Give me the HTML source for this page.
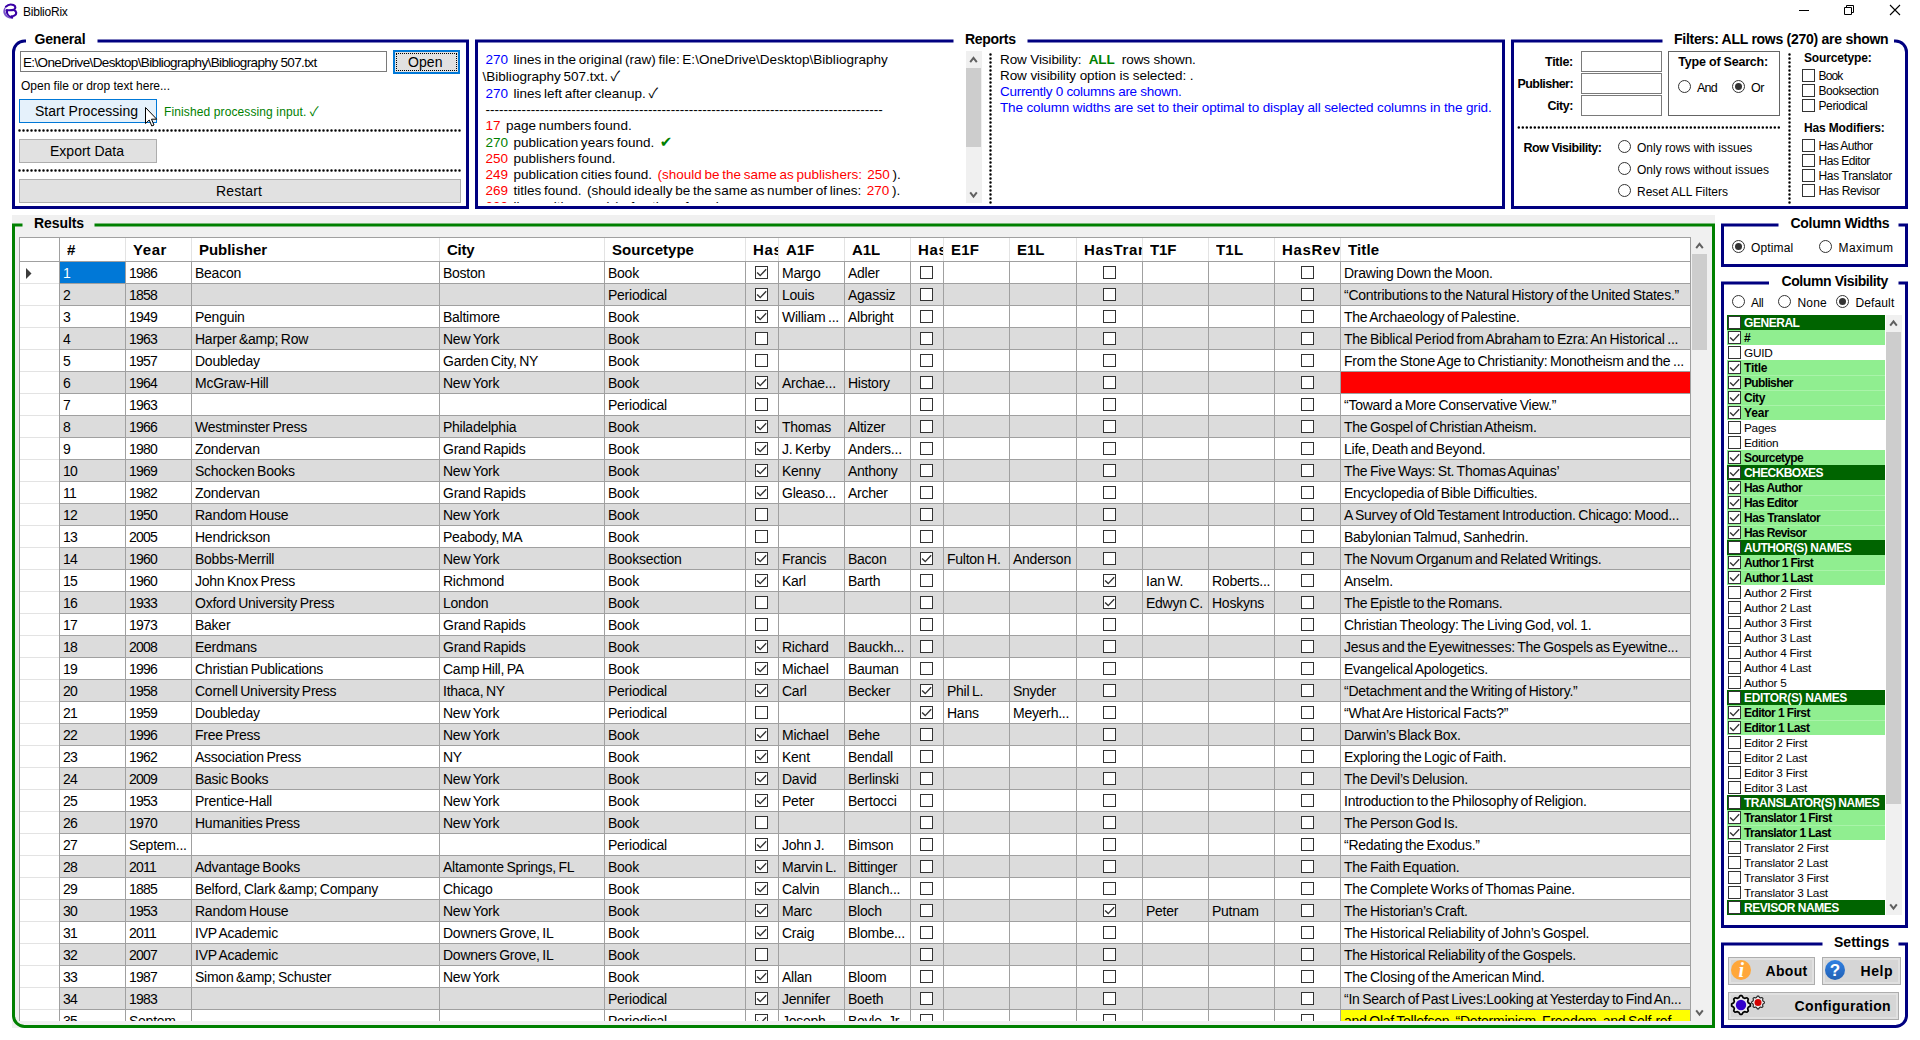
<!DOCTYPE html>
<html lang="en"><head><meta charset="utf-8"><title>BiblioRix</title>
<style>
html,body{margin:0;padding:0;}
body{width:1920px;height:1040px;overflow:hidden;background:#fff;position:relative;font-family:"Liberation Sans",sans-serif;color:#000;}
body div{position:absolute;box-sizing:border-box;}
.t{line-height:20px;white-space:pre;}
svg{position:absolute;left:0;top:0;overflow:visible;}
.btn{background:#e1e1e1;border:1px solid #adadad;}
.tb{background:#fff;border:1px solid #7a7a7a;}
.ck{font-family:"Liberation Sans","Noto Sans CJK SC","DejaVu Sans",sans-serif;font-size:14px;line-height:1;}
.ckb{font-family:"Liberation Sans","DejaVu Sans",sans-serif;font-size:15px;line-height:1;}
.cb{width:13px;height:13px;border:1px solid #333;background:#fff;}
.cb svg{left:-1px;top:-1px;}
.rd{width:13px;height:13px;border:1px solid #333;border-radius:50%;background:#fff;}
.rd.on::after{content:"";position:absolute;left:2px;top:2px;width:7px;height:7px;border-radius:50%;background:#333;}
#grid{left:19px;top:237px;width:1672px;height:784px;overflow:hidden;background:#fff;}
.r{left:0;width:1672px;height:22px;border-bottom:1px solid #a0a0a0;background:#fff;}
.r.a{background:#dcdcdc;}
.r .h{left:1px;top:0;width:39px;height:22px;background:#fff;border-bottom:1px solid #e3e3e3;}
.c{top:0;height:21px;overflow:hidden;}
.c .t{left:3px;top:1px;font-size:14px;letter-spacing:-.25px;word-spacing:-1px;}
.c .t.n{letter-spacing:-.78px;}
.c .cb{top:4px;}
.vl{top:25px;width:1px;height:760px;background:#a0a0a0;}
.hl{top:1px;width:1px;height:23px;background:#e3e3e3;}
.hd{top:1px;height:23px;overflow:hidden;}
.hd .t{left:7px;top:2px;font-size:15px;font-weight:bold;transform:scaleY(.94);transform-origin:0 15px;}
#clist{left:1727px;top:315px;width:158px;height:600px;overflow:hidden;background:#fff;}
.li{left:0;width:158px;height:15px;}
.li.g{background:#90ee90;}
.li.d{background:#006400;color:#fff;}
.li .cb{left:1px;top:1px;}
.li .t{left:17px;top:-2px;font-size:11.8px;letter-spacing:-.25px;}
.li.g+.li.g{box-shadow:inset 0 1px 0 #a9f3a9;}
.li.g .t,.li.d .t{font-weight:bold;font-size:12px;}
</style></head><body>

<div style="left:12px;top:215px;width:1703px;height:813px;background:#f0f0f0;"></div>
<div class="t" style="left:23px;top:2px;font-size:12px;letter-spacing:-0.232px;">BiblioRix</div>
<div class="t" style="left:34.5px;top:29px;font-size:14px;font-weight:bold;letter-spacing:-0.177px;">General</div>
<div class="t" style="left:965px;top:29px;font-size:14px;font-weight:bold;letter-spacing:-0.328px;">Reports</div>
<div class="t" style="left:1674px;top:29px;font-size:14px;font-weight:bold;letter-spacing:-0.269px;">Filters: ALL rows (270) are shown</div>
<div class="t" style="left:34px;top:213px;font-size:14px;font-weight:bold;letter-spacing:-0.082px;">Results</div>
<div class="t" style="left:1790.5px;top:213px;font-size:14px;font-weight:bold;letter-spacing:-0.287px;">Column Widths</div>
<div class="t" style="left:1781.5px;top:271px;font-size:14px;font-weight:bold;letter-spacing:-0.407px;">Column Visibility</div>
<div class="t" style="left:1834px;top:932px;font-size:14px;font-weight:bold;letter-spacing:0.009px;">Settings</div>
<div class="tb" style="left:20px;top:51px;width:367px;height:21px;"></div>
<div class="t" style="left:23px;top:53px;font-size:13.5px;letter-spacing:-0.635px;">E:\OneDrive\Desktop\Bibliography\Bibliography 507.txt</div>
<div style="left:393px;top:50px;width:67px;height:24px;background:#e1e1e1;border:2px solid #0078d7;"><div style="left:1px;top:1px;right:1px;bottom:1px;border:1px dotted #000;"></div></div>
<div class="t" style="left:408px;top:52px;font-size:14px;letter-spacing:0.063px;">Open</div>
<div class="t" style="left:21px;top:76px;font-size:12px;letter-spacing:-0.014px;">Open file or drop text here...</div>
<div style="left:19px;top:99px;width:138px;height:24px;background:#e5f1fb;border:1px solid #0078d7;"></div>
<div class="t" style="left:35px;top:101px;font-size:14px;letter-spacing:0.018px;">Start Processing</div>
<div class="t" style="left:164px;top:102px;font-size:12px;color:#008000;letter-spacing:0.115px;">Finished processing input. <span class="ck" style="font-size:13px">✓</span></div>
<div class="btn" style="left:19px;top:139px;width:138px;height:24px;"></div>
<div class="t" style="left:50px;top:141px;font-size:14px;letter-spacing:0.007px;">Export Data</div>
<div class="btn" style="left:19px;top:179px;width:442px;height:24px;"></div>
<div class="t" style="left:216px;top:181px;font-size:14px;letter-spacing:0.125px;">Restart</div>
<div style="left:478px;top:43px;width:488px;height:160px;overflow:hidden;">
<div class="t" style="left:7.5px;top:7px;font-size:13.5px;word-spacing:-1.1px;letter-spacing:.02px;"><span style="color:#0000ff">270</span>  lines in the original (raw) file: E:\OneDrive\Desktop\Bibliography</div>
<div class="t" style="left:4.5px;top:24px;font-size:13.5px;word-spacing:-1.1px;letter-spacing:.02px;">\Bibliography 507.txt. <span class="ck">✓</span></div>
<div class="t" style="left:7.5px;top:41px;font-size:13.5px;word-spacing:-1.1px;letter-spacing:.02px;"><span style="color:#0000ff">270</span>  lines left after cleanup. <span class="ck">✓</span></div>
<div class="t" style="left:7.5px;top:57px;font-size:13.5px;word-spacing:-1.1px;letter-spacing:.02px;">----------------------------------------------------------------------------------------</div>
<div class="t" style="left:7.5px;top:73px;font-size:13.5px;word-spacing:-1.1px;letter-spacing:.02px;"><span style="color:#ff0000">17</span>  page numbers found.</div>
<div class="t" style="left:7.5px;top:90px;font-size:13.5px;word-spacing:-1.1px;letter-spacing:.02px;"><span style="color:#008000">270</span>  publication years found.  <span style="color:#008000"><span class="ckb">✔</span></span></div>
<div class="t" style="left:7.5px;top:106px;font-size:13.5px;word-spacing:-1.1px;letter-spacing:.02px;"><span style="color:#ff0000">250</span>  publishers found.</div>
<div class="t" style="left:7.5px;top:122px;font-size:13.5px;word-spacing:-1.1px;letter-spacing:.02px;"><span style="color:#ff0000">249</span>  publication cities found.  <span style="color:#ff0000">(should be the same as publishers:  250</span> ).</div>
<div class="t" style="left:7.5px;top:138px;font-size:13.5px;word-spacing:-1.1px;letter-spacing:.02px;"><span style="color:#ff0000">269</span>  titles found.  (should ideally be the same as number of lines:  <span style="color:#ff0000">270</span> ).</div>
<div class="t" style="left:7.5px;top:154px;font-size:13.5px;word-spacing:-1.1px;letter-spacing:.02px;"><span style="color:#ff0000">239</span>  lines with name(s) of authors found.</div>
</div>
<div style="left:966px;top:51px;width:16px;height:152px;background:#f0f0f0;"></div>
<div style="left:966px;top:68px;width:15px;height:79px;background:#cdcdcd;"></div>
<div class="t" style="left:1000px;top:50px;font-size:13.5px;letter-spacing:-0.110px;">Row Visibility:  <b style="color:#008000">ALL</b>  rows shown.</div>
<div class="t" style="left:1000px;top:66px;font-size:13.5px;letter-spacing:-0.088px;">Row visibility option is selected: .</div>
<div class="t" style="left:1000px;top:82px;font-size:13.5px;color:#0000ff;letter-spacing:-0.281px;">Currently 0 columns are shown.</div>
<div class="t" style="left:1000px;top:98px;font-size:13.5px;color:#0000ff;letter-spacing:-0.129px;">The column widths are set to their optimal to display all selected columns in the grid.</div>
<div class="t" style="left:1545px;top:52px;font-size:12.5px;font-weight:bold;letter-spacing:-0.272px;">Title:</div>
<div class="t" style="left:1517.5px;top:74px;font-size:12.5px;font-weight:bold;letter-spacing:-0.562px;">Publisher:</div>
<div class="t" style="left:1547.5px;top:96px;font-size:12.5px;font-weight:bold;letter-spacing:-0.456px;">City:</div>
<div class="tb" style="left:1581px;top:51px;width:81px;height:21px;"></div>
<div class="tb" style="left:1581px;top:73px;width:81px;height:21px;"></div>
<div class="tb" style="left:1581px;top:95px;width:81px;height:21px;"></div>
<div style="left:1668px;top:51px;width:112px;height:65px;border:1px solid #646464;"></div>
<div class="t" style="left:1678.3px;top:52px;font-size:12.5px;font-weight:bold;letter-spacing:-0.210px;">Type of Search:</div>
<div class="rd" style="left:1678px;top:80px;width:13px;height:13px;"></div>
<div class="t" style="left:1697px;top:78px;font-size:12.5px;letter-spacing:-0.747px;">And</div>
<div class="rd on" style="left:1732px;top:80px;width:13px;height:13px;"></div>
<div class="t" style="left:1751px;top:78px;font-size:12.5px;letter-spacing:-0.443px;">Or</div>
<div class="t" style="left:1523.5px;top:138px;font-size:12.5px;font-weight:bold;letter-spacing:-0.480px;">Row Visibility:</div>
<div class="rd" style="left:1618px;top:140px;width:13px;height:13px;"></div>
<div class="t" style="left:1637px;top:138px;font-size:12px;">Only rows with issues</div>
<div class="rd" style="left:1618px;top:162px;width:13px;height:13px;"></div>
<div class="t" style="left:1637px;top:160px;font-size:12px;">Only rows without issues</div>
<div class="rd" style="left:1618px;top:184px;width:13px;height:13px;"></div>
<div class="t" style="left:1637px;top:182px;font-size:12px;">Reset ALL Filters</div>
<div class="t" style="left:1804px;top:48px;font-size:12px;font-weight:bold;letter-spacing:-0.169px;">Sourcetype:</div>
<div class="cb" style="left:1802px;top:69px;"></div>
<div class="t" style="left:1818.5px;top:66px;font-size:12px;letter-spacing:-0.838px;">Book</div>
<div class="cb" style="left:1802px;top:84px;"></div>
<div class="t" style="left:1818.5px;top:81px;font-size:12px;letter-spacing:-0.489px;">Booksection</div>
<div class="cb" style="left:1802px;top:99px;"></div>
<div class="t" style="left:1818.5px;top:96px;font-size:12px;letter-spacing:-0.395px;">Periodical</div>
<div class="t" style="left:1804px;top:118px;font-size:12px;font-weight:bold;letter-spacing:-0.149px;">Has Modifiers:</div>
<div class="cb" style="left:1802px;top:139px;"></div>
<div class="t" style="left:1818.5px;top:136px;font-size:12px;letter-spacing:-0.537px;">Has Author</div>
<div class="cb" style="left:1802px;top:154px;"></div>
<div class="t" style="left:1818.5px;top:151px;font-size:12px;letter-spacing:-0.462px;">Has Editor</div>
<div class="cb" style="left:1802px;top:169px;"></div>
<div class="t" style="left:1818.5px;top:166px;font-size:12px;letter-spacing:-0.338px;">Has Translator</div>
<div class="cb" style="left:1802px;top:184px;"></div>
<div class="t" style="left:1818.5px;top:181px;font-size:12px;letter-spacing:-0.373px;">Has Revisor</div>
<div class="rd on" style="left:1732px;top:240px;width:13px;height:13px;"></div>
<div class="t" style="left:1751px;top:238px;font-size:12px;letter-spacing:0.129px;">Optimal</div>
<div class="rd" style="left:1819px;top:240px;width:13px;height:13px;"></div>
<div class="t" style="left:1838.5px;top:238px;font-size:12px;letter-spacing:0.428px;">Maximum</div>
<div class="rd" style="left:1732px;top:295px;width:13px;height:13px;"></div>
<div class="t" style="left:1751px;top:293px;font-size:12px;letter-spacing:-0.362px;">All</div>
<div class="rd" style="left:1778px;top:295px;width:13px;height:13px;"></div>
<div class="t" style="left:1797.5px;top:293px;font-size:12px;letter-spacing:0.178px;">None</div>
<div class="rd on" style="left:1836px;top:295px;width:13px;height:13px;"></div>
<div class="t" style="left:1855.4px;top:293px;font-size:12px;letter-spacing:0.140px;">Default</div>
<div id="clist">
<div class="li d" style="top:0px;">
<div class="cb" style="left:1px;top:1px;"></div>
<div class="t" style="letter-spacing:-0.453px">GENERAL</div></div>
<div class="li g" style="top:15px;">
<div class="cb" style="left:1px;top:1px;"><svg width="13" height="13" viewBox="0 0 13 13"><path d="M2.1 6.5L5.2 9.6L11.2 3.2" fill="none" stroke="#333" stroke-width="1.35"/></svg></div>
<div class="t">#</div></div>
<div class="li " style="top:30px;">
<div class="cb" style="left:1px;top:1px;"></div>
<div class="t">GUID</div></div>
<div class="li g" style="top:45px;">
<div class="cb" style="left:1px;top:1px;"><svg width="13" height="13" viewBox="0 0 13 13"><path d="M2.1 6.5L5.2 9.6L11.2 3.2" fill="none" stroke="#333" stroke-width="1.35"/></svg></div>
<div class="t" style="letter-spacing:-0.230px">Title</div></div>
<div class="li g" style="top:60px;">
<div class="cb" style="left:1px;top:1px;"><svg width="13" height="13" viewBox="0 0 13 13"><path d="M2.1 6.5L5.2 9.6L11.2 3.2" fill="none" stroke="#333" stroke-width="1.35"/></svg></div>
<div class="t" style="letter-spacing:-0.642px">Publisher</div></div>
<div class="li g" style="top:75px;">
<div class="cb" style="left:1px;top:1px;"><svg width="13" height="13" viewBox="0 0 13 13"><path d="M2.1 6.5L5.2 9.6L11.2 3.2" fill="none" stroke="#333" stroke-width="1.35"/></svg></div>
<div class="t" style="letter-spacing:-0.443px">City</div></div>
<div class="li g" style="top:90px;">
<div class="cb" style="left:1px;top:1px;"><svg width="13" height="13" viewBox="0 0 13 13"><path d="M2.1 6.5L5.2 9.6L11.2 3.2" fill="none" stroke="#333" stroke-width="1.35"/></svg></div>
<div class="t" style="letter-spacing:-0.140px">Year</div></div>
<div class="li " style="top:105px;">
<div class="cb" style="left:1px;top:1px;"></div>
<div class="t">Pages</div></div>
<div class="li " style="top:120px;">
<div class="cb" style="left:1px;top:1px;"></div>
<div class="t">Edition</div></div>
<div class="li g" style="top:135px;">
<div class="cb" style="left:1px;top:1px;"><svg width="13" height="13" viewBox="0 0 13 13"><path d="M2.1 6.5L5.2 9.6L11.2 3.2" fill="none" stroke="#333" stroke-width="1.35"/></svg></div>
<div class="t" style="letter-spacing:-0.626px">Sourcetype</div></div>
<div class="li d" style="top:150px;">
<div class="cb" style="left:1px;top:1px;"><svg width="13" height="13" viewBox="0 0 13 13"><path d="M2.1 6.5L5.2 9.6L11.2 3.2" fill="none" stroke="#333" stroke-width="1.35"/></svg></div>
<div class="t" style="letter-spacing:-0.578px">CHECKBOXES</div></div>
<div class="li g" style="top:165px;">
<div class="cb" style="left:1px;top:1px;"><svg width="13" height="13" viewBox="0 0 13 13"><path d="M2.1 6.5L5.2 9.6L11.2 3.2" fill="none" stroke="#333" stroke-width="1.35"/></svg></div>
<div class="t" style="letter-spacing:-0.623px">Has Author</div></div>
<div class="li g" style="top:180px;">
<div class="cb" style="left:1px;top:1px;"><svg width="13" height="13" viewBox="0 0 13 13"><path d="M2.1 6.5L5.2 9.6L11.2 3.2" fill="none" stroke="#333" stroke-width="1.35"/></svg></div>
<div class="t" style="letter-spacing:-0.641px">Has Editor</div></div>
<div class="li g" style="top:195px;">
<div class="cb" style="left:1px;top:1px;"><svg width="13" height="13" viewBox="0 0 13 13"><path d="M2.1 6.5L5.2 9.6L11.2 3.2" fill="none" stroke="#333" stroke-width="1.35"/></svg></div>
<div class="t" style="letter-spacing:-0.519px">Has Translator</div></div>
<div class="li g" style="top:210px;">
<div class="cb" style="left:1px;top:1px;"><svg width="13" height="13" viewBox="0 0 13 13"><path d="M2.1 6.5L5.2 9.6L11.2 3.2" fill="none" stroke="#333" stroke-width="1.35"/></svg></div>
<div class="t" style="letter-spacing:-0.643px">Has Revisor</div></div>
<div class="li d" style="top:225px;">
<div class="cb" style="left:1px;top:1px;"></div>
<div class="t" style="letter-spacing:-0.447px">AUTHOR(S) NAMES</div></div>
<div class="li g" style="top:240px;">
<div class="cb" style="left:1px;top:1px;"><svg width="13" height="13" viewBox="0 0 13 13"><path d="M2.1 6.5L5.2 9.6L11.2 3.2" fill="none" stroke="#333" stroke-width="1.35"/></svg></div>
<div class="t" style="letter-spacing:-0.691px">Author 1 First</div></div>
<div class="li g" style="top:255px;">
<div class="cb" style="left:1px;top:1px;"><svg width="13" height="13" viewBox="0 0 13 13"><path d="M2.1 6.5L5.2 9.6L11.2 3.2" fill="none" stroke="#333" stroke-width="1.35"/></svg></div>
<div class="t" style="letter-spacing:-0.703px">Author 1 Last</div></div>
<div class="li " style="top:270px;">
<div class="cb" style="left:1px;top:1px;"></div>
<div class="t">Author 2 First</div></div>
<div class="li " style="top:285px;">
<div class="cb" style="left:1px;top:1px;"></div>
<div class="t">Author 2 Last</div></div>
<div class="li " style="top:300px;">
<div class="cb" style="left:1px;top:1px;"></div>
<div class="t">Author 3 First</div></div>
<div class="li " style="top:315px;">
<div class="cb" style="left:1px;top:1px;"></div>
<div class="t">Author 3 Last</div></div>
<div class="li " style="top:330px;">
<div class="cb" style="left:1px;top:1px;"></div>
<div class="t">Author 4 First</div></div>
<div class="li " style="top:345px;">
<div class="cb" style="left:1px;top:1px;"></div>
<div class="t">Author 4 Last</div></div>
<div class="li " style="top:360px;">
<div class="cb" style="left:1px;top:1px;"></div>
<div class="t">Author 5</div></div>
<div class="li d" style="top:375px;">
<div class="cb" style="left:1px;top:1px;"></div>
<div class="t" style="letter-spacing:-0.319px">EDITOR(S) NAMES</div></div>
<div class="li g" style="top:390px;">
<div class="cb" style="left:1px;top:1px;"><svg width="13" height="13" viewBox="0 0 13 13"><path d="M2.1 6.5L5.2 9.6L11.2 3.2" fill="none" stroke="#333" stroke-width="1.35"/></svg></div>
<div class="t" style="letter-spacing:-0.586px">Editor 1 First</div></div>
<div class="li g" style="top:405px;">
<div class="cb" style="left:1px;top:1px;"><svg width="13" height="13" viewBox="0 0 13 13"><path d="M2.1 6.5L5.2 9.6L11.2 3.2" fill="none" stroke="#333" stroke-width="1.35"/></svg></div>
<div class="t" style="letter-spacing:-0.560px">Editor 1 Last</div></div>
<div class="li " style="top:420px;">
<div class="cb" style="left:1px;top:1px;"></div>
<div class="t">Editor 2 First</div></div>
<div class="li " style="top:435px;">
<div class="cb" style="left:1px;top:1px;"></div>
<div class="t">Editor 2 Last</div></div>
<div class="li " style="top:450px;">
<div class="cb" style="left:1px;top:1px;"></div>
<div class="t">Editor 3 First</div></div>
<div class="li " style="top:465px;">
<div class="cb" style="left:1px;top:1px;"></div>
<div class="t">Editor 3 Last</div></div>
<div class="li d" style="top:480px;">
<div class="cb" style="left:1px;top:1px;"></div>
<div class="t" style="letter-spacing:-0.470px">TRANSLATOR(S) NAMES</div></div>
<div class="li g" style="top:495px;">
<div class="cb" style="left:1px;top:1px;"><svg width="13" height="13" viewBox="0 0 13 13"><path d="M2.1 6.5L5.2 9.6L11.2 3.2" fill="none" stroke="#333" stroke-width="1.35"/></svg></div>
<div class="t" style="letter-spacing:-0.543px">Translator 1 First</div></div>
<div class="li g" style="top:510px;">
<div class="cb" style="left:1px;top:1px;"><svg width="13" height="13" viewBox="0 0 13 13"><path d="M2.1 6.5L5.2 9.6L11.2 3.2" fill="none" stroke="#333" stroke-width="1.35"/></svg></div>
<div class="t" style="letter-spacing:-0.543px">Translator 1 Last</div></div>
<div class="li " style="top:525px;">
<div class="cb" style="left:1px;top:1px;"></div>
<div class="t">Translator 2 First</div></div>
<div class="li " style="top:540px;">
<div class="cb" style="left:1px;top:1px;"></div>
<div class="t">Translator 2 Last</div></div>
<div class="li " style="top:555px;">
<div class="cb" style="left:1px;top:1px;"></div>
<div class="t">Translator 3 First</div></div>
<div class="li " style="top:570px;">
<div class="cb" style="left:1px;top:1px;"></div>
<div class="t">Translator 3 Last</div></div>
<div class="li d" style="top:585px;">
<div class="cb" style="left:1px;top:1px;"></div>
<div class="t" style="letter-spacing:-0.445px">REVISOR NAMES</div></div>
</div>
<div style="left:1886px;top:315px;width:16px;height:600px;background:#f0f0f0;"></div>
<div style="left:1886px;top:332px;width:15px;height:472px;background:#cdcdcd;"></div>
<div style="left:1728px;top:957px;width:87px;height:28px;background:#e1e1e1;border:1px solid #adadad;"><div style="left:2px;top:2px;right:2px;bottom:2px;background:#d6d6d6;"></div></div>
<div style="left:1822px;top:957px;width:79px;height:28px;background:#e1e1e1;border:1px solid #adadad;"><div style="left:2px;top:2px;right:2px;bottom:2px;background:#d6d6d6;"></div></div>
<div style="left:1728px;top:992px;width:171px;height:28px;background:#e1e1e1;border:1px solid #adadad;"><div style="left:2px;top:2px;right:2px;bottom:2px;background:#d6d6d6;"></div></div>
<div class="t" style="left:1765.5px;top:961px;font-size:14px;font-weight:bold;letter-spacing:0.314px;">About</div>
<div class="t" style="left:1860.5px;top:961px;font-size:14px;font-weight:bold;letter-spacing:0.590px;">Help</div>
<div class="t" style="left:1794.5px;top:996px;font-size:14px;font-weight:bold;letter-spacing:0.365px;">Configuration</div>
<div id="grid">
<div style="left:0;top:0;width:1672px;height:25px;background:#fff;border-top:1px solid #a0a0a0;border-bottom:1px solid #a0a0a0;"></div>
<div class="hd" style="left:41px;width:65px;"><div class="t" style="letter-spacing:1.257px;">#</div></div>
<div class="hd" style="left:107px;width:65px;"><div class="t" style="letter-spacing:0.575px;">Year</div></div>
<div class="hd" style="left:173px;width:247px;"><div class="t" style="letter-spacing:-0.039px;">Publisher</div></div>
<div class="hd" style="left:421px;width:164px;"><div class="t" style="letter-spacing:-0.272px;">City</div></div>
<div class="hd" style="left:586px;width:140px;"><div class="t" style="letter-spacing:0.030px;">Sourcetype</div></div>
<div class="hd" style="left:727px;width:32px;"><div class="t" style="letter-spacing:0.65px;">HasAuthor</div></div>
<div class="hd" style="left:760px;width:65px;"><div class="t" style="letter-spacing:-0.029px;">A1F</div></div>
<div class="hd" style="left:826px;width:65px;"><div class="t" style="letter-spacing:-0.113px;">A1L</div></div>
<div class="hd" style="left:892px;width:32px;"><div class="t" style="letter-spacing:0.65px;">HasEditor</div></div>
<div class="hd" style="left:925px;width:65px;"><div class="t" style="letter-spacing:0.163px;">E1F</div></div>
<div class="hd" style="left:991px;width:66px;"><div class="t" style="letter-spacing:-0.004px;">E1L</div></div>
<div class="hd" style="left:1058px;width:65px;"><div class="t" style="letter-spacing:0.65px;">HasTranslator</div></div>
<div class="hd" style="left:1124px;width:65px;"><div class="t" style="letter-spacing:-0.139px;">T1F</div></div>
<div class="hd" style="left:1190px;width:65px;"><div class="t" style="letter-spacing:0.194px;">T1L</div></div>
<div class="hd" style="left:1256px;width:65px;"><div class="t" style="letter-spacing:0.65px;">HasRevisor</div></div>
<div class="hd" style="left:1322px;width:349px;"><div class="t" style="letter-spacing:0.137px;">Title</div></div>
<div class="r" style="top:25px;"><div class="h"></div>
<div class="c" style="left:41px;width:65px;background:#0078d7;color:#fff;"><div class="t n">1</div></div>
<div class="c" style="left:107px;width:65px;"><div class="t n">1986</div></div>
<div class="c" style="left:173px;width:247px;"><div class="t">Beacon</div></div>
<div class="c" style="left:421px;width:164px;"><div class="t">Boston</div></div>
<div class="c" style="left:586px;width:140px;"><div class="t">Book</div></div>
<div class="c" style="left:727px;width:32px;">
<div class="cb" style="left:9px;top:4px;"><svg width="13" height="13" viewBox="0 0 13 13"><path d="M2.1 6.5L5.2 9.6L11.2 3.2" fill="none" stroke="#333" stroke-width="1.35"/></svg></div>
</div>
<div class="c" style="left:760px;width:65px;"><div class="t">Margo</div></div>
<div class="c" style="left:826px;width:65px;"><div class="t">Adler</div></div>
<div class="c" style="left:892px;width:32px;">
<div class="cb" style="left:9px;top:4px;"></div>
</div>
<div class="c" style="left:1058px;width:65px;">
<div class="cb" style="left:26px;top:4px;"></div>
</div>
<div class="c" style="left:1256px;width:65px;">
<div class="cb" style="left:26px;top:4px;"></div>
</div>
<div class="c" style="left:1322px;width:349px;"><div class="t">Drawing Down the Moon.</div></div>
</div>
<div class="r a" style="top:47px;"><div class="h"></div>
<div class="c" style="left:41px;width:65px;"><div class="t n">2</div></div>
<div class="c" style="left:107px;width:65px;"><div class="t n">1858</div></div>
<div class="c" style="left:586px;width:140px;"><div class="t">Periodical</div></div>
<div class="c" style="left:727px;width:32px;">
<div class="cb" style="left:9px;top:4px;"><svg width="13" height="13" viewBox="0 0 13 13"><path d="M2.1 6.5L5.2 9.6L11.2 3.2" fill="none" stroke="#333" stroke-width="1.35"/></svg></div>
</div>
<div class="c" style="left:760px;width:65px;"><div class="t">Louis</div></div>
<div class="c" style="left:826px;width:65px;"><div class="t">Agassiz</div></div>
<div class="c" style="left:892px;width:32px;">
<div class="cb" style="left:9px;top:4px;"></div>
</div>
<div class="c" style="left:1058px;width:65px;">
<div class="cb" style="left:26px;top:4px;"></div>
</div>
<div class="c" style="left:1256px;width:65px;">
<div class="cb" style="left:26px;top:4px;"></div>
</div>
<div class="c" style="left:1322px;width:349px;"><div class="t">“Contributions to the Natural History of the United States.”</div></div>
</div>
<div class="r" style="top:69px;"><div class="h"></div>
<div class="c" style="left:41px;width:65px;"><div class="t n">3</div></div>
<div class="c" style="left:107px;width:65px;"><div class="t n">1949</div></div>
<div class="c" style="left:173px;width:247px;"><div class="t">Penguin</div></div>
<div class="c" style="left:421px;width:164px;"><div class="t">Baltimore</div></div>
<div class="c" style="left:586px;width:140px;"><div class="t">Book</div></div>
<div class="c" style="left:727px;width:32px;">
<div class="cb" style="left:9px;top:4px;"><svg width="13" height="13" viewBox="0 0 13 13"><path d="M2.1 6.5L5.2 9.6L11.2 3.2" fill="none" stroke="#333" stroke-width="1.35"/></svg></div>
</div>
<div class="c" style="left:760px;width:65px;"><div class="t">William ...</div></div>
<div class="c" style="left:826px;width:65px;"><div class="t">Albright</div></div>
<div class="c" style="left:892px;width:32px;">
<div class="cb" style="left:9px;top:4px;"></div>
</div>
<div class="c" style="left:1058px;width:65px;">
<div class="cb" style="left:26px;top:4px;"></div>
</div>
<div class="c" style="left:1256px;width:65px;">
<div class="cb" style="left:26px;top:4px;"></div>
</div>
<div class="c" style="left:1322px;width:349px;"><div class="t">The Archaeology of Palestine.</div></div>
</div>
<div class="r a" style="top:91px;"><div class="h"></div>
<div class="c" style="left:41px;width:65px;"><div class="t n">4</div></div>
<div class="c" style="left:107px;width:65px;"><div class="t n">1963</div></div>
<div class="c" style="left:173px;width:247px;"><div class="t">Harper &amp;amp; Row</div></div>
<div class="c" style="left:421px;width:164px;"><div class="t">New York</div></div>
<div class="c" style="left:586px;width:140px;"><div class="t">Book</div></div>
<div class="c" style="left:727px;width:32px;">
<div class="cb" style="left:9px;top:4px;"></div>
</div>
<div class="c" style="left:892px;width:32px;">
<div class="cb" style="left:9px;top:4px;"></div>
</div>
<div class="c" style="left:1058px;width:65px;">
<div class="cb" style="left:26px;top:4px;"></div>
</div>
<div class="c" style="left:1256px;width:65px;">
<div class="cb" style="left:26px;top:4px;"></div>
</div>
<div class="c" style="left:1322px;width:349px;"><div class="t">The Biblical Period from Abraham to Ezra: An Historical ...</div></div>
</div>
<div class="r" style="top:113px;"><div class="h"></div>
<div class="c" style="left:41px;width:65px;"><div class="t n">5</div></div>
<div class="c" style="left:107px;width:65px;"><div class="t n">1957</div></div>
<div class="c" style="left:173px;width:247px;"><div class="t">Doubleday</div></div>
<div class="c" style="left:421px;width:164px;"><div class="t">Garden City, NY</div></div>
<div class="c" style="left:586px;width:140px;"><div class="t">Book</div></div>
<div class="c" style="left:727px;width:32px;">
<div class="cb" style="left:9px;top:4px;"></div>
</div>
<div class="c" style="left:892px;width:32px;">
<div class="cb" style="left:9px;top:4px;"></div>
</div>
<div class="c" style="left:1058px;width:65px;">
<div class="cb" style="left:26px;top:4px;"></div>
</div>
<div class="c" style="left:1256px;width:65px;">
<div class="cb" style="left:26px;top:4px;"></div>
</div>
<div class="c" style="left:1322px;width:349px;"><div class="t">From the Stone Age to Christianity: Monotheism and the ...</div></div>
</div>
<div class="r a" style="top:135px;"><div class="h"></div>
<div class="c" style="left:41px;width:65px;"><div class="t n">6</div></div>
<div class="c" style="left:107px;width:65px;"><div class="t n">1964</div></div>
<div class="c" style="left:173px;width:247px;"><div class="t">McGraw-Hill</div></div>
<div class="c" style="left:421px;width:164px;"><div class="t">New York</div></div>
<div class="c" style="left:586px;width:140px;"><div class="t">Book</div></div>
<div class="c" style="left:727px;width:32px;">
<div class="cb" style="left:9px;top:4px;"><svg width="13" height="13" viewBox="0 0 13 13"><path d="M2.1 6.5L5.2 9.6L11.2 3.2" fill="none" stroke="#333" stroke-width="1.35"/></svg></div>
</div>
<div class="c" style="left:760px;width:65px;"><div class="t">Archae...</div></div>
<div class="c" style="left:826px;width:65px;"><div class="t">History</div></div>
<div class="c" style="left:892px;width:32px;">
<div class="cb" style="left:9px;top:4px;"></div>
</div>
<div class="c" style="left:1058px;width:65px;">
<div class="cb" style="left:26px;top:4px;"></div>
</div>
<div class="c" style="left:1256px;width:65px;">
<div class="cb" style="left:26px;top:4px;"></div>
</div>
<div class="c" style="left:1322px;width:349px;background:#ff0000;"></div>
</div>
<div class="r" style="top:157px;"><div class="h"></div>
<div class="c" style="left:41px;width:65px;"><div class="t n">7</div></div>
<div class="c" style="left:107px;width:65px;"><div class="t n">1963</div></div>
<div class="c" style="left:586px;width:140px;"><div class="t">Periodical</div></div>
<div class="c" style="left:727px;width:32px;">
<div class="cb" style="left:9px;top:4px;"></div>
</div>
<div class="c" style="left:892px;width:32px;">
<div class="cb" style="left:9px;top:4px;"></div>
</div>
<div class="c" style="left:1058px;width:65px;">
<div class="cb" style="left:26px;top:4px;"></div>
</div>
<div class="c" style="left:1256px;width:65px;">
<div class="cb" style="left:26px;top:4px;"></div>
</div>
<div class="c" style="left:1322px;width:349px;"><div class="t">“Toward a More Conservative View.”</div></div>
</div>
<div class="r a" style="top:179px;"><div class="h"></div>
<div class="c" style="left:41px;width:65px;"><div class="t n">8</div></div>
<div class="c" style="left:107px;width:65px;"><div class="t n">1966</div></div>
<div class="c" style="left:173px;width:247px;"><div class="t">Westminster Press</div></div>
<div class="c" style="left:421px;width:164px;"><div class="t">Philadelphia</div></div>
<div class="c" style="left:586px;width:140px;"><div class="t">Book</div></div>
<div class="c" style="left:727px;width:32px;">
<div class="cb" style="left:9px;top:4px;"><svg width="13" height="13" viewBox="0 0 13 13"><path d="M2.1 6.5L5.2 9.6L11.2 3.2" fill="none" stroke="#333" stroke-width="1.35"/></svg></div>
</div>
<div class="c" style="left:760px;width:65px;"><div class="t">Thomas</div></div>
<div class="c" style="left:826px;width:65px;"><div class="t">Altizer</div></div>
<div class="c" style="left:892px;width:32px;">
<div class="cb" style="left:9px;top:4px;"></div>
</div>
<div class="c" style="left:1058px;width:65px;">
<div class="cb" style="left:26px;top:4px;"></div>
</div>
<div class="c" style="left:1256px;width:65px;">
<div class="cb" style="left:26px;top:4px;"></div>
</div>
<div class="c" style="left:1322px;width:349px;"><div class="t">The Gospel of Christian Atheism.</div></div>
</div>
<div class="r" style="top:201px;"><div class="h"></div>
<div class="c" style="left:41px;width:65px;"><div class="t n">9</div></div>
<div class="c" style="left:107px;width:65px;"><div class="t n">1980</div></div>
<div class="c" style="left:173px;width:247px;"><div class="t">Zondervan</div></div>
<div class="c" style="left:421px;width:164px;"><div class="t">Grand Rapids</div></div>
<div class="c" style="left:586px;width:140px;"><div class="t">Book</div></div>
<div class="c" style="left:727px;width:32px;">
<div class="cb" style="left:9px;top:4px;"><svg width="13" height="13" viewBox="0 0 13 13"><path d="M2.1 6.5L5.2 9.6L11.2 3.2" fill="none" stroke="#333" stroke-width="1.35"/></svg></div>
</div>
<div class="c" style="left:760px;width:65px;"><div class="t">J. Kerby</div></div>
<div class="c" style="left:826px;width:65px;"><div class="t">Anders...</div></div>
<div class="c" style="left:892px;width:32px;">
<div class="cb" style="left:9px;top:4px;"></div>
</div>
<div class="c" style="left:1058px;width:65px;">
<div class="cb" style="left:26px;top:4px;"></div>
</div>
<div class="c" style="left:1256px;width:65px;">
<div class="cb" style="left:26px;top:4px;"></div>
</div>
<div class="c" style="left:1322px;width:349px;"><div class="t">Life, Death and Beyond.</div></div>
</div>
<div class="r a" style="top:223px;"><div class="h"></div>
<div class="c" style="left:41px;width:65px;"><div class="t n">10</div></div>
<div class="c" style="left:107px;width:65px;"><div class="t n">1969</div></div>
<div class="c" style="left:173px;width:247px;"><div class="t">Schocken Books</div></div>
<div class="c" style="left:421px;width:164px;"><div class="t">New York</div></div>
<div class="c" style="left:586px;width:140px;"><div class="t">Book</div></div>
<div class="c" style="left:727px;width:32px;">
<div class="cb" style="left:9px;top:4px;"><svg width="13" height="13" viewBox="0 0 13 13"><path d="M2.1 6.5L5.2 9.6L11.2 3.2" fill="none" stroke="#333" stroke-width="1.35"/></svg></div>
</div>
<div class="c" style="left:760px;width:65px;"><div class="t">Kenny</div></div>
<div class="c" style="left:826px;width:65px;"><div class="t">Anthony</div></div>
<div class="c" style="left:892px;width:32px;">
<div class="cb" style="left:9px;top:4px;"></div>
</div>
<div class="c" style="left:1058px;width:65px;">
<div class="cb" style="left:26px;top:4px;"></div>
</div>
<div class="c" style="left:1256px;width:65px;">
<div class="cb" style="left:26px;top:4px;"></div>
</div>
<div class="c" style="left:1322px;width:349px;"><div class="t">The Five Ways: St. Thomas Aquinas’</div></div>
</div>
<div class="r" style="top:245px;"><div class="h"></div>
<div class="c" style="left:41px;width:65px;"><div class="t n">11</div></div>
<div class="c" style="left:107px;width:65px;"><div class="t n">1982</div></div>
<div class="c" style="left:173px;width:247px;"><div class="t">Zondervan</div></div>
<div class="c" style="left:421px;width:164px;"><div class="t">Grand Rapids</div></div>
<div class="c" style="left:586px;width:140px;"><div class="t">Book</div></div>
<div class="c" style="left:727px;width:32px;">
<div class="cb" style="left:9px;top:4px;"><svg width="13" height="13" viewBox="0 0 13 13"><path d="M2.1 6.5L5.2 9.6L11.2 3.2" fill="none" stroke="#333" stroke-width="1.35"/></svg></div>
</div>
<div class="c" style="left:760px;width:65px;"><div class="t">Gleaso...</div></div>
<div class="c" style="left:826px;width:65px;"><div class="t">Archer</div></div>
<div class="c" style="left:892px;width:32px;">
<div class="cb" style="left:9px;top:4px;"></div>
</div>
<div class="c" style="left:1058px;width:65px;">
<div class="cb" style="left:26px;top:4px;"></div>
</div>
<div class="c" style="left:1256px;width:65px;">
<div class="cb" style="left:26px;top:4px;"></div>
</div>
<div class="c" style="left:1322px;width:349px;"><div class="t">Encyclopedia of Bible Difficulties.</div></div>
</div>
<div class="r a" style="top:267px;"><div class="h"></div>
<div class="c" style="left:41px;width:65px;"><div class="t n">12</div></div>
<div class="c" style="left:107px;width:65px;"><div class="t n">1950</div></div>
<div class="c" style="left:173px;width:247px;"><div class="t">Random House</div></div>
<div class="c" style="left:421px;width:164px;"><div class="t">New York</div></div>
<div class="c" style="left:586px;width:140px;"><div class="t">Book</div></div>
<div class="c" style="left:727px;width:32px;">
<div class="cb" style="left:9px;top:4px;"></div>
</div>
<div class="c" style="left:892px;width:32px;">
<div class="cb" style="left:9px;top:4px;"></div>
</div>
<div class="c" style="left:1058px;width:65px;">
<div class="cb" style="left:26px;top:4px;"></div>
</div>
<div class="c" style="left:1256px;width:65px;">
<div class="cb" style="left:26px;top:4px;"></div>
</div>
<div class="c" style="left:1322px;width:349px;"><div class="t">A Survey of Old Testament Introduction. Chicago: Mood...</div></div>
</div>
<div class="r" style="top:289px;"><div class="h"></div>
<div class="c" style="left:41px;width:65px;"><div class="t n">13</div></div>
<div class="c" style="left:107px;width:65px;"><div class="t n">2005</div></div>
<div class="c" style="left:173px;width:247px;"><div class="t">Hendrickson</div></div>
<div class="c" style="left:421px;width:164px;"><div class="t">Peabody, MA</div></div>
<div class="c" style="left:586px;width:140px;"><div class="t">Book</div></div>
<div class="c" style="left:727px;width:32px;">
<div class="cb" style="left:9px;top:4px;"></div>
</div>
<div class="c" style="left:892px;width:32px;">
<div class="cb" style="left:9px;top:4px;"></div>
</div>
<div class="c" style="left:1058px;width:65px;">
<div class="cb" style="left:26px;top:4px;"></div>
</div>
<div class="c" style="left:1256px;width:65px;">
<div class="cb" style="left:26px;top:4px;"></div>
</div>
<div class="c" style="left:1322px;width:349px;"><div class="t">Babylonian Talmud, Sanhedrin.</div></div>
</div>
<div class="r a" style="top:311px;"><div class="h"></div>
<div class="c" style="left:41px;width:65px;"><div class="t n">14</div></div>
<div class="c" style="left:107px;width:65px;"><div class="t n">1960</div></div>
<div class="c" style="left:173px;width:247px;"><div class="t">Bobbs-Merrill</div></div>
<div class="c" style="left:421px;width:164px;"><div class="t">New York</div></div>
<div class="c" style="left:586px;width:140px;"><div class="t">Booksection</div></div>
<div class="c" style="left:727px;width:32px;">
<div class="cb" style="left:9px;top:4px;"><svg width="13" height="13" viewBox="0 0 13 13"><path d="M2.1 6.5L5.2 9.6L11.2 3.2" fill="none" stroke="#333" stroke-width="1.35"/></svg></div>
</div>
<div class="c" style="left:760px;width:65px;"><div class="t">Francis</div></div>
<div class="c" style="left:826px;width:65px;"><div class="t">Bacon</div></div>
<div class="c" style="left:892px;width:32px;">
<div class="cb" style="left:9px;top:4px;"><svg width="13" height="13" viewBox="0 0 13 13"><path d="M2.1 6.5L5.2 9.6L11.2 3.2" fill="none" stroke="#333" stroke-width="1.35"/></svg></div>
</div>
<div class="c" style="left:925px;width:65px;"><div class="t">Fulton H.</div></div>
<div class="c" style="left:991px;width:66px;"><div class="t">Anderson</div></div>
<div class="c" style="left:1058px;width:65px;">
<div class="cb" style="left:26px;top:4px;"></div>
</div>
<div class="c" style="left:1256px;width:65px;">
<div class="cb" style="left:26px;top:4px;"></div>
</div>
<div class="c" style="left:1322px;width:349px;"><div class="t">The Novum Organum and Related Writings.</div></div>
</div>
<div class="r" style="top:333px;"><div class="h"></div>
<div class="c" style="left:41px;width:65px;"><div class="t n">15</div></div>
<div class="c" style="left:107px;width:65px;"><div class="t n">1960</div></div>
<div class="c" style="left:173px;width:247px;"><div class="t">John Knox Press</div></div>
<div class="c" style="left:421px;width:164px;"><div class="t">Richmond</div></div>
<div class="c" style="left:586px;width:140px;"><div class="t">Book</div></div>
<div class="c" style="left:727px;width:32px;">
<div class="cb" style="left:9px;top:4px;"><svg width="13" height="13" viewBox="0 0 13 13"><path d="M2.1 6.5L5.2 9.6L11.2 3.2" fill="none" stroke="#333" stroke-width="1.35"/></svg></div>
</div>
<div class="c" style="left:760px;width:65px;"><div class="t">Karl</div></div>
<div class="c" style="left:826px;width:65px;"><div class="t">Barth</div></div>
<div class="c" style="left:892px;width:32px;">
<div class="cb" style="left:9px;top:4px;"></div>
</div>
<div class="c" style="left:1058px;width:65px;">
<div class="cb" style="left:26px;top:4px;"><svg width="13" height="13" viewBox="0 0 13 13"><path d="M2.1 6.5L5.2 9.6L11.2 3.2" fill="none" stroke="#333" stroke-width="1.35"/></svg></div>
</div>
<div class="c" style="left:1124px;width:65px;"><div class="t">Ian W.</div></div>
<div class="c" style="left:1190px;width:65px;"><div class="t">Roberts...</div></div>
<div class="c" style="left:1256px;width:65px;">
<div class="cb" style="left:26px;top:4px;"></div>
</div>
<div class="c" style="left:1322px;width:349px;"><div class="t">Anselm.</div></div>
</div>
<div class="r a" style="top:355px;"><div class="h"></div>
<div class="c" style="left:41px;width:65px;"><div class="t n">16</div></div>
<div class="c" style="left:107px;width:65px;"><div class="t n">1933</div></div>
<div class="c" style="left:173px;width:247px;"><div class="t">Oxford University Press</div></div>
<div class="c" style="left:421px;width:164px;"><div class="t">London</div></div>
<div class="c" style="left:586px;width:140px;"><div class="t">Book</div></div>
<div class="c" style="left:727px;width:32px;">
<div class="cb" style="left:9px;top:4px;"></div>
</div>
<div class="c" style="left:892px;width:32px;">
<div class="cb" style="left:9px;top:4px;"></div>
</div>
<div class="c" style="left:1058px;width:65px;">
<div class="cb" style="left:26px;top:4px;"><svg width="13" height="13" viewBox="0 0 13 13"><path d="M2.1 6.5L5.2 9.6L11.2 3.2" fill="none" stroke="#333" stroke-width="1.35"/></svg></div>
</div>
<div class="c" style="left:1124px;width:65px;"><div class="t">Edwyn C.</div></div>
<div class="c" style="left:1190px;width:65px;"><div class="t">Hoskyns</div></div>
<div class="c" style="left:1256px;width:65px;">
<div class="cb" style="left:26px;top:4px;"></div>
</div>
<div class="c" style="left:1322px;width:349px;"><div class="t">The Epistle to the Romans.</div></div>
</div>
<div class="r" style="top:377px;"><div class="h"></div>
<div class="c" style="left:41px;width:65px;"><div class="t n">17</div></div>
<div class="c" style="left:107px;width:65px;"><div class="t n">1973</div></div>
<div class="c" style="left:173px;width:247px;"><div class="t">Baker</div></div>
<div class="c" style="left:421px;width:164px;"><div class="t">Grand Rapids</div></div>
<div class="c" style="left:586px;width:140px;"><div class="t">Book</div></div>
<div class="c" style="left:727px;width:32px;">
<div class="cb" style="left:9px;top:4px;"></div>
</div>
<div class="c" style="left:892px;width:32px;">
<div class="cb" style="left:9px;top:4px;"></div>
</div>
<div class="c" style="left:1058px;width:65px;">
<div class="cb" style="left:26px;top:4px;"></div>
</div>
<div class="c" style="left:1256px;width:65px;">
<div class="cb" style="left:26px;top:4px;"></div>
</div>
<div class="c" style="left:1322px;width:349px;"><div class="t">Christian Theology: The Living God, vol. 1.</div></div>
</div>
<div class="r a" style="top:399px;"><div class="h"></div>
<div class="c" style="left:41px;width:65px;"><div class="t n">18</div></div>
<div class="c" style="left:107px;width:65px;"><div class="t n">2008</div></div>
<div class="c" style="left:173px;width:247px;"><div class="t">Eerdmans</div></div>
<div class="c" style="left:421px;width:164px;"><div class="t">Grand Rapids</div></div>
<div class="c" style="left:586px;width:140px;"><div class="t">Book</div></div>
<div class="c" style="left:727px;width:32px;">
<div class="cb" style="left:9px;top:4px;"><svg width="13" height="13" viewBox="0 0 13 13"><path d="M2.1 6.5L5.2 9.6L11.2 3.2" fill="none" stroke="#333" stroke-width="1.35"/></svg></div>
</div>
<div class="c" style="left:760px;width:65px;"><div class="t">Richard</div></div>
<div class="c" style="left:826px;width:65px;"><div class="t">Bauckh...</div></div>
<div class="c" style="left:892px;width:32px;">
<div class="cb" style="left:9px;top:4px;"></div>
</div>
<div class="c" style="left:1058px;width:65px;">
<div class="cb" style="left:26px;top:4px;"></div>
</div>
<div class="c" style="left:1256px;width:65px;">
<div class="cb" style="left:26px;top:4px;"></div>
</div>
<div class="c" style="left:1322px;width:349px;"><div class="t">Jesus and the Eyewitnesses: The Gospels as Eyewitne...</div></div>
</div>
<div class="r" style="top:421px;"><div class="h"></div>
<div class="c" style="left:41px;width:65px;"><div class="t n">19</div></div>
<div class="c" style="left:107px;width:65px;"><div class="t n">1996</div></div>
<div class="c" style="left:173px;width:247px;"><div class="t">Christian Publications</div></div>
<div class="c" style="left:421px;width:164px;"><div class="t">Camp Hill, PA</div></div>
<div class="c" style="left:586px;width:140px;"><div class="t">Book</div></div>
<div class="c" style="left:727px;width:32px;">
<div class="cb" style="left:9px;top:4px;"><svg width="13" height="13" viewBox="0 0 13 13"><path d="M2.1 6.5L5.2 9.6L11.2 3.2" fill="none" stroke="#333" stroke-width="1.35"/></svg></div>
</div>
<div class="c" style="left:760px;width:65px;"><div class="t">Michael</div></div>
<div class="c" style="left:826px;width:65px;"><div class="t">Bauman</div></div>
<div class="c" style="left:892px;width:32px;">
<div class="cb" style="left:9px;top:4px;"></div>
</div>
<div class="c" style="left:1058px;width:65px;">
<div class="cb" style="left:26px;top:4px;"></div>
</div>
<div class="c" style="left:1256px;width:65px;">
<div class="cb" style="left:26px;top:4px;"></div>
</div>
<div class="c" style="left:1322px;width:349px;"><div class="t">Evangelical Apologetics.</div></div>
</div>
<div class="r a" style="top:443px;"><div class="h"></div>
<div class="c" style="left:41px;width:65px;"><div class="t n">20</div></div>
<div class="c" style="left:107px;width:65px;"><div class="t n">1958</div></div>
<div class="c" style="left:173px;width:247px;"><div class="t">Cornell University Press</div></div>
<div class="c" style="left:421px;width:164px;"><div class="t">Ithaca, NY</div></div>
<div class="c" style="left:586px;width:140px;"><div class="t">Periodical</div></div>
<div class="c" style="left:727px;width:32px;">
<div class="cb" style="left:9px;top:4px;"><svg width="13" height="13" viewBox="0 0 13 13"><path d="M2.1 6.5L5.2 9.6L11.2 3.2" fill="none" stroke="#333" stroke-width="1.35"/></svg></div>
</div>
<div class="c" style="left:760px;width:65px;"><div class="t">Carl</div></div>
<div class="c" style="left:826px;width:65px;"><div class="t">Becker</div></div>
<div class="c" style="left:892px;width:32px;">
<div class="cb" style="left:9px;top:4px;"><svg width="13" height="13" viewBox="0 0 13 13"><path d="M2.1 6.5L5.2 9.6L11.2 3.2" fill="none" stroke="#333" stroke-width="1.35"/></svg></div>
</div>
<div class="c" style="left:925px;width:65px;"><div class="t">Phil L.</div></div>
<div class="c" style="left:991px;width:66px;"><div class="t">Snyder</div></div>
<div class="c" style="left:1058px;width:65px;">
<div class="cb" style="left:26px;top:4px;"></div>
</div>
<div class="c" style="left:1256px;width:65px;">
<div class="cb" style="left:26px;top:4px;"></div>
</div>
<div class="c" style="left:1322px;width:349px;"><div class="t">“Detachment and the Writing of History.”</div></div>
</div>
<div class="r" style="top:465px;"><div class="h"></div>
<div class="c" style="left:41px;width:65px;"><div class="t n">21</div></div>
<div class="c" style="left:107px;width:65px;"><div class="t n">1959</div></div>
<div class="c" style="left:173px;width:247px;"><div class="t">Doubleday</div></div>
<div class="c" style="left:421px;width:164px;"><div class="t">New York</div></div>
<div class="c" style="left:586px;width:140px;"><div class="t">Periodical</div></div>
<div class="c" style="left:727px;width:32px;">
<div class="cb" style="left:9px;top:4px;"></div>
</div>
<div class="c" style="left:892px;width:32px;">
<div class="cb" style="left:9px;top:4px;"><svg width="13" height="13" viewBox="0 0 13 13"><path d="M2.1 6.5L5.2 9.6L11.2 3.2" fill="none" stroke="#333" stroke-width="1.35"/></svg></div>
</div>
<div class="c" style="left:925px;width:65px;"><div class="t">Hans</div></div>
<div class="c" style="left:991px;width:66px;"><div class="t">Meyerh...</div></div>
<div class="c" style="left:1058px;width:65px;">
<div class="cb" style="left:26px;top:4px;"></div>
</div>
<div class="c" style="left:1256px;width:65px;">
<div class="cb" style="left:26px;top:4px;"></div>
</div>
<div class="c" style="left:1322px;width:349px;"><div class="t">“What Are Historical Facts?”</div></div>
</div>
<div class="r a" style="top:487px;"><div class="h"></div>
<div class="c" style="left:41px;width:65px;"><div class="t n">22</div></div>
<div class="c" style="left:107px;width:65px;"><div class="t n">1996</div></div>
<div class="c" style="left:173px;width:247px;"><div class="t">Free Press</div></div>
<div class="c" style="left:421px;width:164px;"><div class="t">New York</div></div>
<div class="c" style="left:586px;width:140px;"><div class="t">Book</div></div>
<div class="c" style="left:727px;width:32px;">
<div class="cb" style="left:9px;top:4px;"><svg width="13" height="13" viewBox="0 0 13 13"><path d="M2.1 6.5L5.2 9.6L11.2 3.2" fill="none" stroke="#333" stroke-width="1.35"/></svg></div>
</div>
<div class="c" style="left:760px;width:65px;"><div class="t">Michael</div></div>
<div class="c" style="left:826px;width:65px;"><div class="t">Behe</div></div>
<div class="c" style="left:892px;width:32px;">
<div class="cb" style="left:9px;top:4px;"></div>
</div>
<div class="c" style="left:1058px;width:65px;">
<div class="cb" style="left:26px;top:4px;"></div>
</div>
<div class="c" style="left:1256px;width:65px;">
<div class="cb" style="left:26px;top:4px;"></div>
</div>
<div class="c" style="left:1322px;width:349px;"><div class="t">Darwin’s Black Box.</div></div>
</div>
<div class="r" style="top:509px;"><div class="h"></div>
<div class="c" style="left:41px;width:65px;"><div class="t n">23</div></div>
<div class="c" style="left:107px;width:65px;"><div class="t n">1962</div></div>
<div class="c" style="left:173px;width:247px;"><div class="t">Association Press</div></div>
<div class="c" style="left:421px;width:164px;"><div class="t">NY</div></div>
<div class="c" style="left:586px;width:140px;"><div class="t">Book</div></div>
<div class="c" style="left:727px;width:32px;">
<div class="cb" style="left:9px;top:4px;"><svg width="13" height="13" viewBox="0 0 13 13"><path d="M2.1 6.5L5.2 9.6L11.2 3.2" fill="none" stroke="#333" stroke-width="1.35"/></svg></div>
</div>
<div class="c" style="left:760px;width:65px;"><div class="t">Kent</div></div>
<div class="c" style="left:826px;width:65px;"><div class="t">Bendall</div></div>
<div class="c" style="left:892px;width:32px;">
<div class="cb" style="left:9px;top:4px;"></div>
</div>
<div class="c" style="left:1058px;width:65px;">
<div class="cb" style="left:26px;top:4px;"></div>
</div>
<div class="c" style="left:1256px;width:65px;">
<div class="cb" style="left:26px;top:4px;"></div>
</div>
<div class="c" style="left:1322px;width:349px;"><div class="t">Exploring the Logic of Faith.</div></div>
</div>
<div class="r a" style="top:531px;"><div class="h"></div>
<div class="c" style="left:41px;width:65px;"><div class="t n">24</div></div>
<div class="c" style="left:107px;width:65px;"><div class="t n">2009</div></div>
<div class="c" style="left:173px;width:247px;"><div class="t">Basic Books</div></div>
<div class="c" style="left:421px;width:164px;"><div class="t">New York</div></div>
<div class="c" style="left:586px;width:140px;"><div class="t">Book</div></div>
<div class="c" style="left:727px;width:32px;">
<div class="cb" style="left:9px;top:4px;"><svg width="13" height="13" viewBox="0 0 13 13"><path d="M2.1 6.5L5.2 9.6L11.2 3.2" fill="none" stroke="#333" stroke-width="1.35"/></svg></div>
</div>
<div class="c" style="left:760px;width:65px;"><div class="t">David</div></div>
<div class="c" style="left:826px;width:65px;"><div class="t">Berlinski</div></div>
<div class="c" style="left:892px;width:32px;">
<div class="cb" style="left:9px;top:4px;"></div>
</div>
<div class="c" style="left:1058px;width:65px;">
<div class="cb" style="left:26px;top:4px;"></div>
</div>
<div class="c" style="left:1256px;width:65px;">
<div class="cb" style="left:26px;top:4px;"></div>
</div>
<div class="c" style="left:1322px;width:349px;"><div class="t">The Devil’s Delusion.</div></div>
</div>
<div class="r" style="top:553px;"><div class="h"></div>
<div class="c" style="left:41px;width:65px;"><div class="t n">25</div></div>
<div class="c" style="left:107px;width:65px;"><div class="t n">1953</div></div>
<div class="c" style="left:173px;width:247px;"><div class="t">Prentice-Hall</div></div>
<div class="c" style="left:421px;width:164px;"><div class="t">New York</div></div>
<div class="c" style="left:586px;width:140px;"><div class="t">Book</div></div>
<div class="c" style="left:727px;width:32px;">
<div class="cb" style="left:9px;top:4px;"><svg width="13" height="13" viewBox="0 0 13 13"><path d="M2.1 6.5L5.2 9.6L11.2 3.2" fill="none" stroke="#333" stroke-width="1.35"/></svg></div>
</div>
<div class="c" style="left:760px;width:65px;"><div class="t">Peter</div></div>
<div class="c" style="left:826px;width:65px;"><div class="t">Bertocci</div></div>
<div class="c" style="left:892px;width:32px;">
<div class="cb" style="left:9px;top:4px;"></div>
</div>
<div class="c" style="left:1058px;width:65px;">
<div class="cb" style="left:26px;top:4px;"></div>
</div>
<div class="c" style="left:1256px;width:65px;">
<div class="cb" style="left:26px;top:4px;"></div>
</div>
<div class="c" style="left:1322px;width:349px;"><div class="t">Introduction to the Philosophy of Religion.</div></div>
</div>
<div class="r a" style="top:575px;"><div class="h"></div>
<div class="c" style="left:41px;width:65px;"><div class="t n">26</div></div>
<div class="c" style="left:107px;width:65px;"><div class="t n">1970</div></div>
<div class="c" style="left:173px;width:247px;"><div class="t">Humanities Press</div></div>
<div class="c" style="left:421px;width:164px;"><div class="t">New York</div></div>
<div class="c" style="left:586px;width:140px;"><div class="t">Book</div></div>
<div class="c" style="left:727px;width:32px;">
<div class="cb" style="left:9px;top:4px;"></div>
</div>
<div class="c" style="left:892px;width:32px;">
<div class="cb" style="left:9px;top:4px;"></div>
</div>
<div class="c" style="left:1058px;width:65px;">
<div class="cb" style="left:26px;top:4px;"></div>
</div>
<div class="c" style="left:1256px;width:65px;">
<div class="cb" style="left:26px;top:4px;"></div>
</div>
<div class="c" style="left:1322px;width:349px;"><div class="t">The Person God Is.</div></div>
</div>
<div class="r" style="top:597px;"><div class="h"></div>
<div class="c" style="left:41px;width:65px;"><div class="t n">27</div></div>
<div class="c" style="left:107px;width:65px;"><div class="t">Septem...</div></div>
<div class="c" style="left:586px;width:140px;"><div class="t">Periodical</div></div>
<div class="c" style="left:727px;width:32px;">
<div class="cb" style="left:9px;top:4px;"><svg width="13" height="13" viewBox="0 0 13 13"><path d="M2.1 6.5L5.2 9.6L11.2 3.2" fill="none" stroke="#333" stroke-width="1.35"/></svg></div>
</div>
<div class="c" style="left:760px;width:65px;"><div class="t">John J.</div></div>
<div class="c" style="left:826px;width:65px;"><div class="t">Bimson</div></div>
<div class="c" style="left:892px;width:32px;">
<div class="cb" style="left:9px;top:4px;"></div>
</div>
<div class="c" style="left:1058px;width:65px;">
<div class="cb" style="left:26px;top:4px;"></div>
</div>
<div class="c" style="left:1256px;width:65px;">
<div class="cb" style="left:26px;top:4px;"></div>
</div>
<div class="c" style="left:1322px;width:349px;"><div class="t">“Redating the Exodus.”</div></div>
</div>
<div class="r a" style="top:619px;"><div class="h"></div>
<div class="c" style="left:41px;width:65px;"><div class="t n">28</div></div>
<div class="c" style="left:107px;width:65px;"><div class="t n">2011</div></div>
<div class="c" style="left:173px;width:247px;"><div class="t">Advantage Books</div></div>
<div class="c" style="left:421px;width:164px;"><div class="t">Altamonte Springs, FL</div></div>
<div class="c" style="left:586px;width:140px;"><div class="t">Book</div></div>
<div class="c" style="left:727px;width:32px;">
<div class="cb" style="left:9px;top:4px;"><svg width="13" height="13" viewBox="0 0 13 13"><path d="M2.1 6.5L5.2 9.6L11.2 3.2" fill="none" stroke="#333" stroke-width="1.35"/></svg></div>
</div>
<div class="c" style="left:760px;width:65px;"><div class="t">Marvin L.</div></div>
<div class="c" style="left:826px;width:65px;"><div class="t">Bittinger</div></div>
<div class="c" style="left:892px;width:32px;">
<div class="cb" style="left:9px;top:4px;"></div>
</div>
<div class="c" style="left:1058px;width:65px;">
<div class="cb" style="left:26px;top:4px;"></div>
</div>
<div class="c" style="left:1256px;width:65px;">
<div class="cb" style="left:26px;top:4px;"></div>
</div>
<div class="c" style="left:1322px;width:349px;"><div class="t">The Faith Equation.</div></div>
</div>
<div class="r" style="top:641px;"><div class="h"></div>
<div class="c" style="left:41px;width:65px;"><div class="t n">29</div></div>
<div class="c" style="left:107px;width:65px;"><div class="t n">1885</div></div>
<div class="c" style="left:173px;width:247px;"><div class="t">Belford, Clark &amp;amp; Company</div></div>
<div class="c" style="left:421px;width:164px;"><div class="t">Chicago</div></div>
<div class="c" style="left:586px;width:140px;"><div class="t">Book</div></div>
<div class="c" style="left:727px;width:32px;">
<div class="cb" style="left:9px;top:4px;"><svg width="13" height="13" viewBox="0 0 13 13"><path d="M2.1 6.5L5.2 9.6L11.2 3.2" fill="none" stroke="#333" stroke-width="1.35"/></svg></div>
</div>
<div class="c" style="left:760px;width:65px;"><div class="t">Calvin</div></div>
<div class="c" style="left:826px;width:65px;"><div class="t">Blanch...</div></div>
<div class="c" style="left:892px;width:32px;">
<div class="cb" style="left:9px;top:4px;"></div>
</div>
<div class="c" style="left:1058px;width:65px;">
<div class="cb" style="left:26px;top:4px;"></div>
</div>
<div class="c" style="left:1256px;width:65px;">
<div class="cb" style="left:26px;top:4px;"></div>
</div>
<div class="c" style="left:1322px;width:349px;"><div class="t">The Complete Works of Thomas Paine.</div></div>
</div>
<div class="r a" style="top:663px;"><div class="h"></div>
<div class="c" style="left:41px;width:65px;"><div class="t n">30</div></div>
<div class="c" style="left:107px;width:65px;"><div class="t n">1953</div></div>
<div class="c" style="left:173px;width:247px;"><div class="t">Random House</div></div>
<div class="c" style="left:421px;width:164px;"><div class="t">New York</div></div>
<div class="c" style="left:586px;width:140px;"><div class="t">Book</div></div>
<div class="c" style="left:727px;width:32px;">
<div class="cb" style="left:9px;top:4px;"><svg width="13" height="13" viewBox="0 0 13 13"><path d="M2.1 6.5L5.2 9.6L11.2 3.2" fill="none" stroke="#333" stroke-width="1.35"/></svg></div>
</div>
<div class="c" style="left:760px;width:65px;"><div class="t">Marc</div></div>
<div class="c" style="left:826px;width:65px;"><div class="t">Bloch</div></div>
<div class="c" style="left:892px;width:32px;">
<div class="cb" style="left:9px;top:4px;"></div>
</div>
<div class="c" style="left:1058px;width:65px;">
<div class="cb" style="left:26px;top:4px;"><svg width="13" height="13" viewBox="0 0 13 13"><path d="M2.1 6.5L5.2 9.6L11.2 3.2" fill="none" stroke="#333" stroke-width="1.35"/></svg></div>
</div>
<div class="c" style="left:1124px;width:65px;"><div class="t">Peter</div></div>
<div class="c" style="left:1190px;width:65px;"><div class="t">Putnam</div></div>
<div class="c" style="left:1256px;width:65px;">
<div class="cb" style="left:26px;top:4px;"></div>
</div>
<div class="c" style="left:1322px;width:349px;"><div class="t">The Historian’s Craft.</div></div>
</div>
<div class="r" style="top:685px;"><div class="h"></div>
<div class="c" style="left:41px;width:65px;"><div class="t n">31</div></div>
<div class="c" style="left:107px;width:65px;"><div class="t n">2011</div></div>
<div class="c" style="left:173px;width:247px;"><div class="t">IVP Academic</div></div>
<div class="c" style="left:421px;width:164px;"><div class="t">Downers Grove, IL</div></div>
<div class="c" style="left:586px;width:140px;"><div class="t">Book</div></div>
<div class="c" style="left:727px;width:32px;">
<div class="cb" style="left:9px;top:4px;"><svg width="13" height="13" viewBox="0 0 13 13"><path d="M2.1 6.5L5.2 9.6L11.2 3.2" fill="none" stroke="#333" stroke-width="1.35"/></svg></div>
</div>
<div class="c" style="left:760px;width:65px;"><div class="t">Craig</div></div>
<div class="c" style="left:826px;width:65px;"><div class="t">Blombe...</div></div>
<div class="c" style="left:892px;width:32px;">
<div class="cb" style="left:9px;top:4px;"></div>
</div>
<div class="c" style="left:1058px;width:65px;">
<div class="cb" style="left:26px;top:4px;"></div>
</div>
<div class="c" style="left:1256px;width:65px;">
<div class="cb" style="left:26px;top:4px;"></div>
</div>
<div class="c" style="left:1322px;width:349px;"><div class="t">The Historical Reliability of John’s Gospel.</div></div>
</div>
<div class="r a" style="top:707px;"><div class="h"></div>
<div class="c" style="left:41px;width:65px;"><div class="t n">32</div></div>
<div class="c" style="left:107px;width:65px;"><div class="t n">2007</div></div>
<div class="c" style="left:173px;width:247px;"><div class="t">IVP Academic</div></div>
<div class="c" style="left:421px;width:164px;"><div class="t">Downers Grove, IL</div></div>
<div class="c" style="left:586px;width:140px;"><div class="t">Book</div></div>
<div class="c" style="left:727px;width:32px;">
<div class="cb" style="left:9px;top:4px;"></div>
</div>
<div class="c" style="left:892px;width:32px;">
<div class="cb" style="left:9px;top:4px;"></div>
</div>
<div class="c" style="left:1058px;width:65px;">
<div class="cb" style="left:26px;top:4px;"></div>
</div>
<div class="c" style="left:1256px;width:65px;">
<div class="cb" style="left:26px;top:4px;"></div>
</div>
<div class="c" style="left:1322px;width:349px;"><div class="t">The Historical Reliability of the Gospels.</div></div>
</div>
<div class="r" style="top:729px;"><div class="h"></div>
<div class="c" style="left:41px;width:65px;"><div class="t n">33</div></div>
<div class="c" style="left:107px;width:65px;"><div class="t n">1987</div></div>
<div class="c" style="left:173px;width:247px;"><div class="t">Simon &amp;amp; Schuster</div></div>
<div class="c" style="left:421px;width:164px;"><div class="t">New York</div></div>
<div class="c" style="left:586px;width:140px;"><div class="t">Book</div></div>
<div class="c" style="left:727px;width:32px;">
<div class="cb" style="left:9px;top:4px;"><svg width="13" height="13" viewBox="0 0 13 13"><path d="M2.1 6.5L5.2 9.6L11.2 3.2" fill="none" stroke="#333" stroke-width="1.35"/></svg></div>
</div>
<div class="c" style="left:760px;width:65px;"><div class="t">Allan</div></div>
<div class="c" style="left:826px;width:65px;"><div class="t">Bloom</div></div>
<div class="c" style="left:892px;width:32px;">
<div class="cb" style="left:9px;top:4px;"></div>
</div>
<div class="c" style="left:1058px;width:65px;">
<div class="cb" style="left:26px;top:4px;"></div>
</div>
<div class="c" style="left:1256px;width:65px;">
<div class="cb" style="left:26px;top:4px;"></div>
</div>
<div class="c" style="left:1322px;width:349px;"><div class="t">The Closing of the American Mind.</div></div>
</div>
<div class="r a" style="top:751px;"><div class="h"></div>
<div class="c" style="left:41px;width:65px;"><div class="t n">34</div></div>
<div class="c" style="left:107px;width:65px;"><div class="t n">1983</div></div>
<div class="c" style="left:586px;width:140px;"><div class="t">Periodical</div></div>
<div class="c" style="left:727px;width:32px;">
<div class="cb" style="left:9px;top:4px;"><svg width="13" height="13" viewBox="0 0 13 13"><path d="M2.1 6.5L5.2 9.6L11.2 3.2" fill="none" stroke="#333" stroke-width="1.35"/></svg></div>
</div>
<div class="c" style="left:760px;width:65px;"><div class="t">Jennifer</div></div>
<div class="c" style="left:826px;width:65px;"><div class="t">Boeth</div></div>
<div class="c" style="left:892px;width:32px;">
<div class="cb" style="left:9px;top:4px;"></div>
</div>
<div class="c" style="left:1058px;width:65px;">
<div class="cb" style="left:26px;top:4px;"></div>
</div>
<div class="c" style="left:1256px;width:65px;">
<div class="cb" style="left:26px;top:4px;"></div>
</div>
<div class="c" style="left:1322px;width:349px;"><div class="t">“In Search of Past Lives:Looking at Yesterday to Find An...</div></div>
</div>
<div class="r" style="top:773px;"><div class="h"></div>
<div class="c" style="left:41px;width:65px;"><div class="t n">35</div></div>
<div class="c" style="left:107px;width:65px;"><div class="t">Septem...</div></div>
<div class="c" style="left:586px;width:140px;"><div class="t">Periodical</div></div>
<div class="c" style="left:727px;width:32px;">
<div class="cb" style="left:9px;top:4px;"><svg width="13" height="13" viewBox="0 0 13 13"><path d="M2.1 6.5L5.2 9.6L11.2 3.2" fill="none" stroke="#333" stroke-width="1.35"/></svg></div>
</div>
<div class="c" style="left:760px;width:65px;"><div class="t">Joseph</div></div>
<div class="c" style="left:826px;width:65px;"><div class="t">Boyle, Jr.</div></div>
<div class="c" style="left:892px;width:32px;">
<div class="cb" style="left:9px;top:4px;"></div>
</div>
<div class="c" style="left:1058px;width:65px;">
<div class="cb" style="left:26px;top:4px;"></div>
</div>
<div class="c" style="left:1256px;width:65px;">
<div class="cb" style="left:26px;top:4px;"></div>
</div>
<div class="c" style="left:1322px;width:349px;background:#ffff00;"><div class="t">and Olaf Tollefsen. “Determinism, Freedom, and Self-ref...</div></div>
</div>
<div class="vl" style="left:0px;"></div>
<div class="vl" style="left:40px;"></div>
<div class="vl" style="left:106px;"></div>
<div class="hl" style="left:106px;"></div>
<div class="vl" style="left:172px;"></div>
<div class="hl" style="left:172px;"></div>
<div class="vl" style="left:420px;"></div>
<div class="hl" style="left:420px;"></div>
<div class="vl" style="left:585px;"></div>
<div class="hl" style="left:585px;"></div>
<div class="vl" style="left:726px;"></div>
<div class="hl" style="left:726px;"></div>
<div class="vl" style="left:759px;"></div>
<div class="hl" style="left:759px;"></div>
<div class="vl" style="left:825px;"></div>
<div class="hl" style="left:825px;"></div>
<div class="vl" style="left:891px;"></div>
<div class="hl" style="left:891px;"></div>
<div class="vl" style="left:924px;"></div>
<div class="hl" style="left:924px;"></div>
<div class="vl" style="left:990px;"></div>
<div class="hl" style="left:990px;"></div>
<div class="vl" style="left:1057px;"></div>
<div class="hl" style="left:1057px;"></div>
<div class="vl" style="left:1123px;"></div>
<div class="hl" style="left:1123px;"></div>
<div class="vl" style="left:1189px;"></div>
<div class="hl" style="left:1189px;"></div>
<div class="vl" style="left:1255px;"></div>
<div class="hl" style="left:1255px;"></div>
<div class="vl" style="left:1321px;"></div>
<div class="hl" style="left:1321px;"></div>
<div class="vl" style="left:1671px;"></div>
<div style="left:0;top:0;width:1px;height:25px;background:#a0a0a0;"></div>
<div style="left:40px;top:1px;width:1px;height:24px;background:#a0a0a0;"></div>
<div style="left:1671px;top:0;width:1px;height:25px;background:#a0a0a0;"></div>
</div>
<div style="left:1692px;top:254px;width:15px;height:96px;background:#cdcdcd;"></div>
<svg width="1920" height="1040" viewBox="0 0 1920 1040"><path d="M97.5 41H467.5V207.5H13.5V52A11 11 0 0 1 24.5 41H26" fill="none" stroke="#000080" stroke-width="3" /><path d="M953.5 41H476.5V207.5H1503.5V41H1027.5" fill="none" stroke="#000080" stroke-width="3" /><path d="M1662.5 41H1512.5V207.5H1906.5V52A11 11 0 0 0 1895.5 41H1894" fill="none" stroke="#000080" stroke-width="3" /><path d="M1778.5 225H1722.5V265.5H1906.5V225H1898.5" fill="none" stroke="#000080" stroke-width="3" /><path d="M1769 283H1722.5V926.5H1906.5V283H1898.5" fill="none" stroke="#000080" stroke-width="3" /><path d="M1822.5 944H1722.5V1026.5H1895.5A11 11 0 0 0 1906.5 1015.5V944H1898.5" fill="none" stroke="#000080" stroke-width="3" /><path d="M22.5 225H13.5V1015.5A11 11 0 0 0 24.5 1026.5H1713.5V225H94.5" fill="none" stroke="#008000" stroke-width="3" /><path d="M19.5 130.5L461 130.5" stroke="#000" stroke-width="2.5" stroke-dasharray="0.01 3.99" stroke-linecap="round" fill="none"/><path d="M19.5 170.5L461 170.5" stroke="#000" stroke-width="2.5" stroke-dasharray="0.01 3.99" stroke-linecap="round" fill="none"/><path d="M990.5 54.4L990.5 203" stroke="#000" stroke-width="2.5" stroke-dasharray="0.01 3.99" stroke-linecap="round" fill="none"/><path d="M1518.8 127.5L1780 127.5" stroke="#000" stroke-width="2.5" stroke-dasharray="0.01 3.99" stroke-linecap="round" fill="none"/><path d="M1789.5 54.5L1789.5 203" stroke="#000" stroke-width="2.5" stroke-dasharray="0.01 3.99" stroke-linecap="round" fill="none"/><path d="M1696.2 248.1L1699.5 243.9L1702.8 248.1" fill="none" stroke="#606060" stroke-width="2"/><path d="M1696.2 1010.4L1699.5 1014.6L1702.8 1010.4" fill="none" stroke="#606060" stroke-width="2"/><path d="M970.2 62.1L973.5 57.9L976.8 62.1" fill="none" stroke="#606060" stroke-width="2"/><path d="M970.2 192.4L973.5 196.6L976.8 192.4" fill="none" stroke="#606060" stroke-width="2"/><path d="M1890.2 325.6L1893.5 321.4L1896.8 325.6" fill="none" stroke="#606060" stroke-width="2"/><path d="M1890.2 904.4L1893.5 908.6L1896.8 904.4" fill="none" stroke="#606060" stroke-width="2"/><path d="M1799 10.5H1809" stroke="#000" stroke-width="1" fill="none"/><path d="M1844.5 7.5H1851.5V14.5H1844.5ZM1846.5 7.5V5.5H1853.5V12.5H1851.5" stroke="#000" stroke-width="1" fill="none"/><path d="M1890 5L1900 15M1900 5L1890 15" stroke="#000" stroke-width="1.1" fill="none"/><path d="M26 268L31.5 273.5L26 279Z" fill="#3c3c3c"/><g transform="translate(0 11) scale(1 .9) translate(0 -11)"><path d="M6.3 5.2C2.5 8.4 2.3 14 5.9 17.3C7.6 18.8 9.7 19.5 11.6 19.2C8.7 18.1 6.1 15.7 5.5 12.5C5 10 5.3 7.5 6.3 5.2Z" fill="#6a40c4" opacity=".9"/><g fill="none" stroke="#3a00a6" stroke-linecap="round" stroke-width="2.2"><path d="M6.6 10.1C9 10.2 12.6 10.2 13.8 9.6C16 8.5 15.8 5.3 13.4 4.3C10.9 3.3 7.8 4 6 6.2"/><path d="M13.8 10C16.9 11 17 14.8 14.3 16.2C13.3 16.7 12.2 16.9 11.4 16.9"/><path d="M6.9 10.2C6.5 13.7 8.7 17.2 12.2 18.5"/></g></g><circle cx="1741" cy="970" r="10" fill="#ffa73a"/><text x="1741.3" y="976.6" font-family="Liberation Serif,serif" font-style="italic" font-weight="bold" font-size="20" fill="#fff" text-anchor="middle">i</text><defs><linearGradient id="hg" x1="0" y1="0" x2="0" y2="1"><stop offset="0" stop-color="#2f80e2"/><stop offset="1" stop-color="#2261b4"/></linearGradient></defs><circle cx="1835" cy="970" r="10" fill="url(#hg)"/><text x="1835" y="976" font-family="Liberation Sans,sans-serif" font-weight="bold" font-size="17" fill="#fff" text-anchor="middle">?</text><path d="M1750.35 1004.08L1750.35 1005.92L1748.27 1007.21L1747.70 1008.58L1748.27 1010.96L1746.96 1012.27L1744.58 1011.70L1743.21 1012.27L1741.92 1014.35L1740.08 1014.35L1738.79 1012.27L1737.42 1011.70L1735.04 1012.27L1733.73 1010.96L1734.30 1008.58L1733.73 1007.21L1731.65 1005.92L1731.65 1004.08L1733.73 1002.79L1734.30 1001.42L1733.73 999.04L1735.04 997.73L1737.42 998.30L1738.79 997.73L1740.08 995.65L1741.92 995.65L1743.21 997.73L1744.58 998.30L1746.96 997.73L1748.27 999.04L1747.70 1001.42L1748.27 1002.79Z" fill="#ececec" stroke="#000" stroke-width="1.7" stroke-linejoin="round"/><circle cx="1741" cy="1005" r="5.2" fill="#3300cc"/><path d="M1764.37 1001.87L1764.37 1003.13L1762.98 1004.01L1762.59 1004.95L1762.95 1006.56L1762.06 1007.45L1760.45 1007.09L1759.51 1007.48L1758.63 1008.87L1757.37 1008.87L1756.49 1007.48L1755.55 1007.09L1753.94 1007.45L1753.05 1006.56L1753.41 1004.95L1753.02 1004.01L1751.63 1003.13L1751.63 1001.87L1753.02 1000.99L1753.41 1000.05L1753.05 998.44L1753.94 997.55L1755.55 997.91L1756.49 997.52L1757.37 996.13L1758.63 996.13L1759.51 997.52L1760.45 997.91L1762.06 997.55L1762.95 998.44L1762.59 1000.05L1762.98 1000.99Z" fill="#ececec" stroke="#222" stroke-width="1.1" stroke-linejoin="round"/><circle cx="1758" cy="1002.5" r="3.5" fill="#d40000"/><path d="M145.5 107.5V123.5L149.2 120L151.8 126L154 125L151.5 119.2H156.7Z" fill="#fff" stroke="#000" stroke-width="1" stroke-linejoin="miter"/></svg>
</body></html>
